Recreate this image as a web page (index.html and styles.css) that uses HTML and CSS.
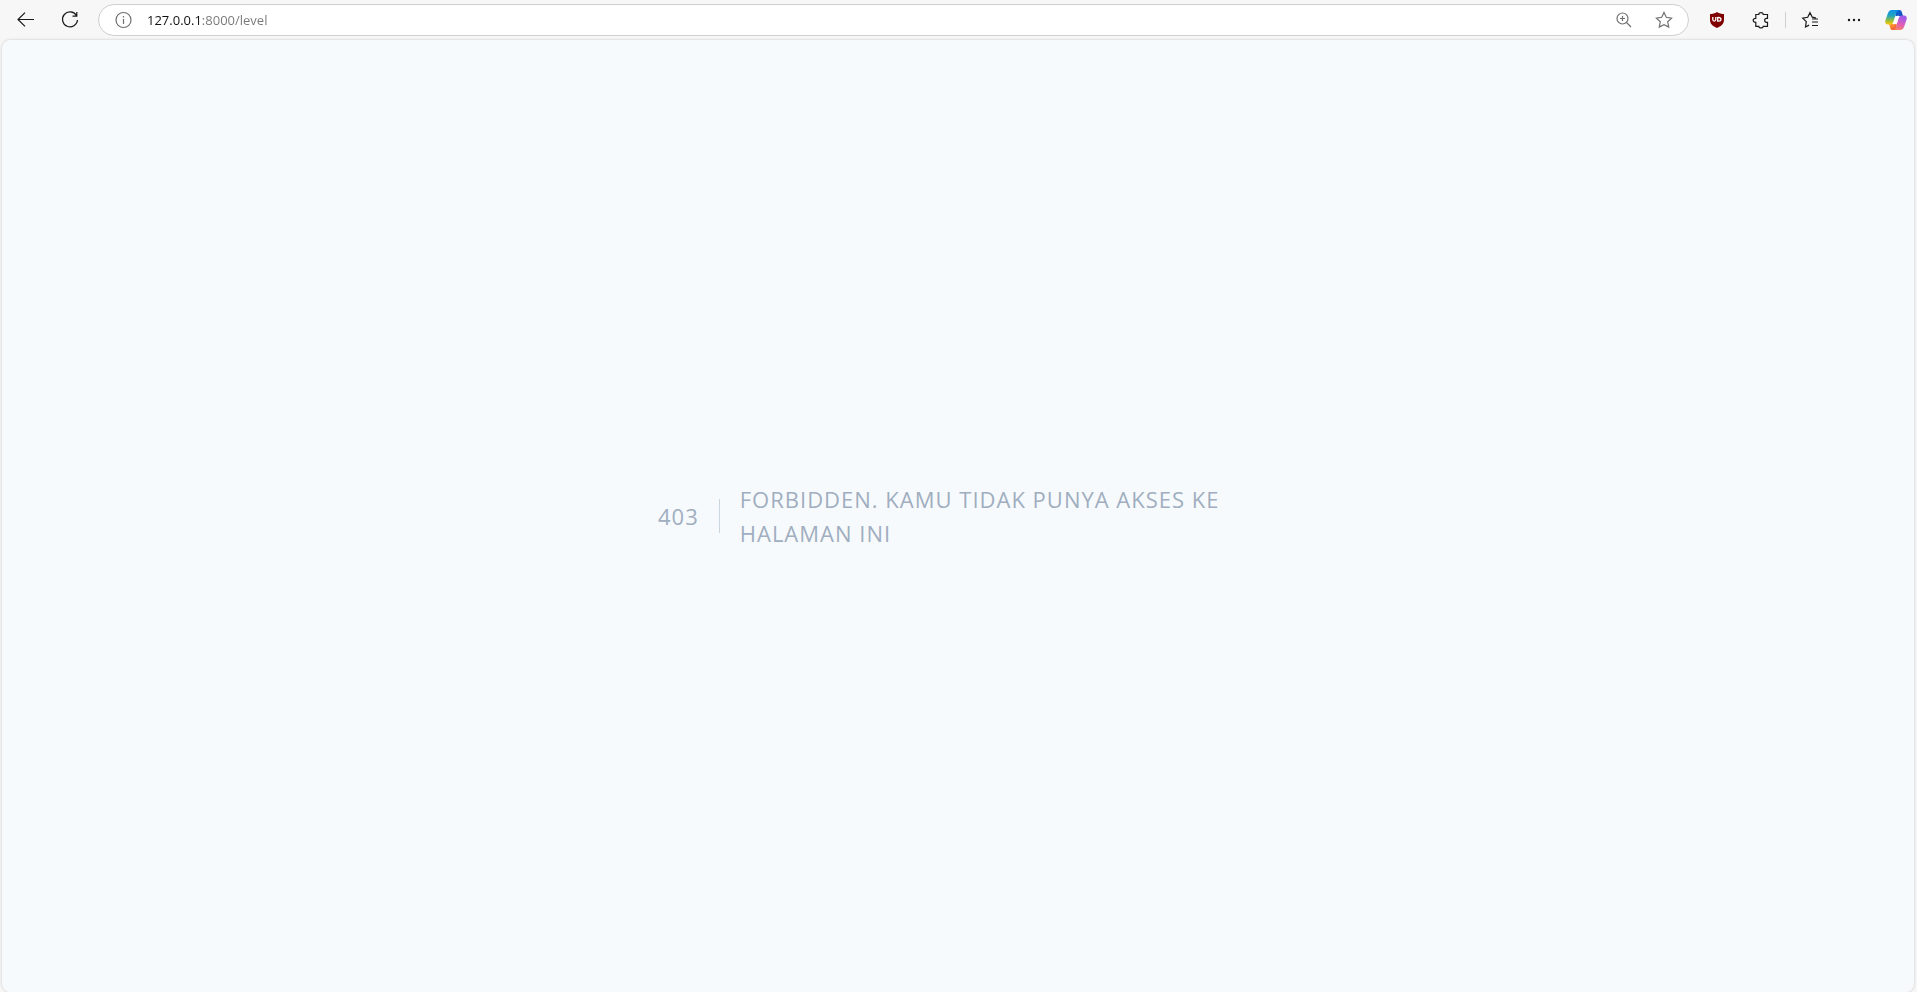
FILE: index.html
```html
<!DOCTYPE html>
<html lang="id">
<head>
<meta charset="utf-8">
<meta name="viewport" content="width=device-width, initial-scale=1">
<title>Forbidden</title>
<link rel="stylesheet" href="styles.css">
</head>
<body>
<header class="toolbar">
  <button class="tool" type="button" aria-label="Back">
    <svg class="icon" viewBox="0 0 20 20"><path d="M18 9.5H2.2M9 2.6 2 9.5l7 6.9"/></svg>
  </button>
  <button class="tool" type="button" aria-label="Refresh">
    <svg class="icon" viewBox="0 0 20 20"><path d="M16.4 5.4A7.5 7.5 0 1 0 17.5 10M16.8 2v4.2h-4.3"/></svg>
  </button>
  <form class="address">
    <button class="address-button" type="button" aria-label="Site information">
      <svg class="icon muted" viewBox="0 0 20 20"><circle cx="10.500" cy="10" r="7.500"/><path d="M10.500 9v5M10.500 6v1.500"/></svg>
    </button>
    <input class="url" type="text" aria-label="Address" value="127.0.0.1:8000/level">
    <button class="address-button" type="button" aria-label="Zoom">
      <svg class="icon muted" viewBox="0 0 20 20"><circle cx="8.500" cy="8.500" r="5.500"/><path d="M12.500 12.500l4.500 4.500M8.500 6v5M6 8.500h5"/></svg>
    </button>
    <button class="address-button" type="button" aria-label="Add to favorites">
      <svg class="icon muted" viewBox="0 0 20 20"><path d="M10 2.500l2.300 4.800 5.300.8-3.900 3.700 1 5.300-4.700-2.500-4.700 2.500 1-5.300-3.900-3.700 5.300-.8z"/></svg>
    </button>
  </form>
  <button class="tool" type="button" aria-label="uBlock Origin">
    <svg class="icon plain" viewBox="0 0 20 20"><path fill="#800000" d="M10 2c2.200 1.500 4.500 2 7 2v6c0 3.800-2.800 6.100-7 8-4.200-1.900-7-4.200-7-8V4c2.500 0 4.800-.5 7-2z"/><path fill="none" stroke="#fff" stroke-width="1.300" d="M5.800 7v2.600c0 2 3 2 3 0V7M10.700 7v4.200h.8c3.300 0 3.300-3.700 0-3.700h-.8"/></svg>
  </button>
  <button class="tool" type="button" aria-label="Extensions">
    <svg class="icon" viewBox="0 0 20 20"><path d="M4.800 4.500h3C7.500 1.900 12.500 1.900 12.200 4.500H16.500V8.300h-1c-2.400 0-2.400 4 0 4h1v4h-4.300c.3 2.200-4.700 2.200-4.400 0h-3v-4c-3.500 0-3.500-4 0-4z"/></svg>
  </button>
  <span class="separator"></span>
  <button class="tool" type="button" aria-label="Favorites">
    <svg class="icon" viewBox="0 0 20 20"><path d="M15.800 7.800l-3.500-.6L10 2.700 7.700 7.300l-5 .8 3.600 3.600-.8 5.300 3.600-1.900M12 9h6M12 12h6M12 15.500h6"/></svg>
  </button>
  <button class="tool" type="button" aria-label="Settings and more">
    <svg class="icon plain" viewBox="0 0 20 20"><circle cx="5" cy="10" r="1.200"/><circle cx="10" cy="10" r="1.200"/><circle cx="15" cy="10" r="1.200"/></svg>
  </button>
  <button class="tool copilot" type="button" aria-label="Copilot">
    <svg class="icon-large" viewBox="0 0 22 22">
      <defs>
        <linearGradient id="left" x1="0" y1="0" x2="0" y2="1"><stop offset="0" stop-color="#0b91e8"/><stop offset=".4" stop-color="#25a5bd"/><stop offset=".7" stop-color="#8dbd45"/><stop offset="1" stop-color="#ffc800"/></linearGradient>
        <linearGradient id="right" x1="0.300" y1="0" x2="0" y2="1"><stop offset="0" stop-color="#a05bea"/><stop offset=".5" stop-color="#e05db5"/><stop offset="1" stop-color="#ff8a50"/></linearGradient>
        <linearGradient id="top" x1="0" y1="0" x2="1" y2="1"><stop offset="0" stop-color="#0a70df"/><stop offset="1" stop-color="#1746b5"/></linearGradient>
        <linearGradient id="bottom" x1="0" y1="0" x2="1" y2="1"><stop offset="0" stop-color="#ffb12e"/><stop offset="1" stop-color="#ee4638"/></linearGradient>
      </defs>
      <path fill="url(#top)" d="M10 1h4.500c1.300 0 1.900.8 2.300 2.100L18 7h-3.500c-1.500-.3-2.500-.3-4 .5z"/>
      <path fill="url(#bottom)" d="M12 21H7.500c-1.300 0-1.900-.8-2.300-2.100L4 15h3.500c1.500.3 2.500.3 4-.5z"/>
      <path fill="url(#left)" d="M7 1h6.500c-1.400.3-2 1.700-2.500 3.300L8.500 12.500C8 14.300 7 15.500 5 15.500H3C.6 15.500-.2 13.500.4 11.500L3 4C3.700 2 5 1 7 1z"/>
      <path fill="url(#right)" d="M15 21H8.500c1.400-.3 2-1.700 2.500-3.300l2.500-8.200c.5-1.800 1.500-3 3.500-3h2c2.400 0 3.200 2 2.600 4L19 18c-.7 2-2 3-4 3z"/>
      <path fill="#fff" d="M11.300 7.200h3.500c-1 .6-1.400 1.600-1.700 2.700l-1.500 4.900H7.400c1-.6 1.300-1.500 1.600-2.400l1.200-4c.2-.7.500-1.200 1.100-1.200z"/>
    </svg>
  </button>
</header>
<main class="page">
  <div class="message-box">
    <h1 class="code">403</h1>
    <p class="message">Forbidden. Kamu tidak punya akses ke halaman ini</p>
  </div>
</main>
</body>
</html>
```
FILE: styles.css
```css
* {
  box-sizing: border-box;
}

body {
  display: flex;
  flex-direction: column;
  min-height: 100vh;
  margin: 0;
  background: #f7f7f7;
  font-family: "Open Sans", "Noto Sans", sans-serif;
}

button {
  display: flex;
  align-items: center;
  justify-content: center;
  padding: 0;
  border: 0;
  background: none;
}

.toolbar {
  display: flex;
  align-items: center;
  height: 40px;
  padding: 0 1px 0 4px;
}

.tool {
  flex: none;
  width: 44px;
  height: 32px;
}

.copilot {
  width: 40px;
}

.icon {
  width: 20px;
  height: 20px;
  fill: none;
  stroke: #1b1b1b;
  stroke-width: 1.2;
}

.muted {
  stroke: #707070;
}

.plain {
  fill: #1b1b1b;
  stroke: none;
}

.icon-large {
  width: 22px;
  height: 22px;
}

.address {
  display: flex;
  flex: 1;
  align-items: center;
  height: 32px;
  margin: 0 6px;
  padding: 0 4px;
  border: 1px solid #cfcfcf;
  border-radius: 16px;
  background: #fff;
}

.address-button {
  flex: none;
  width: 40px;
  height: 28px;
}

.url {
  flex: 1;
  min-width: 0;
  padding: 0 0 0 4px;
  border: 0;
  outline: 0;
  background: linear-gradient(to right, #111 58px, #767676 58px);
  background-clip: text;
  color: transparent;
  font-family: inherit;
  font-size: 13px;
  line-height: 20px;
}

.separator {
  flex: none;
  width: 1px;
  height: 16px;
  margin: 0 2px;
  background: #cfcfcf;
}

.page {
  display: flex;
  flex: 1;
  align-items: center;
  justify-content: center;
  margin: 0 3px 0 2px;
  border-radius: 8px;
  background: #f7fafc;
  box-shadow: 0 0 3px rgba(0, 0, 0, 0.2);
}

.message-box {
  display: flex;
  align-items: center;
  width: 100%;
  max-width: 720px;
  padding: 0 40px;
}

.code,
.message {
  margin: 0;
  color: #a0aec0;
  font-size: 22px;
  font-weight: 400;
  line-height: 34px;
  letter-spacing: 1px;
}

.code {
  padding: 0 20px;
  border-right: 1px solid #cbd5e0;
}

.message {
  margin-left: 20px;
  text-transform: uppercase;
}
```
